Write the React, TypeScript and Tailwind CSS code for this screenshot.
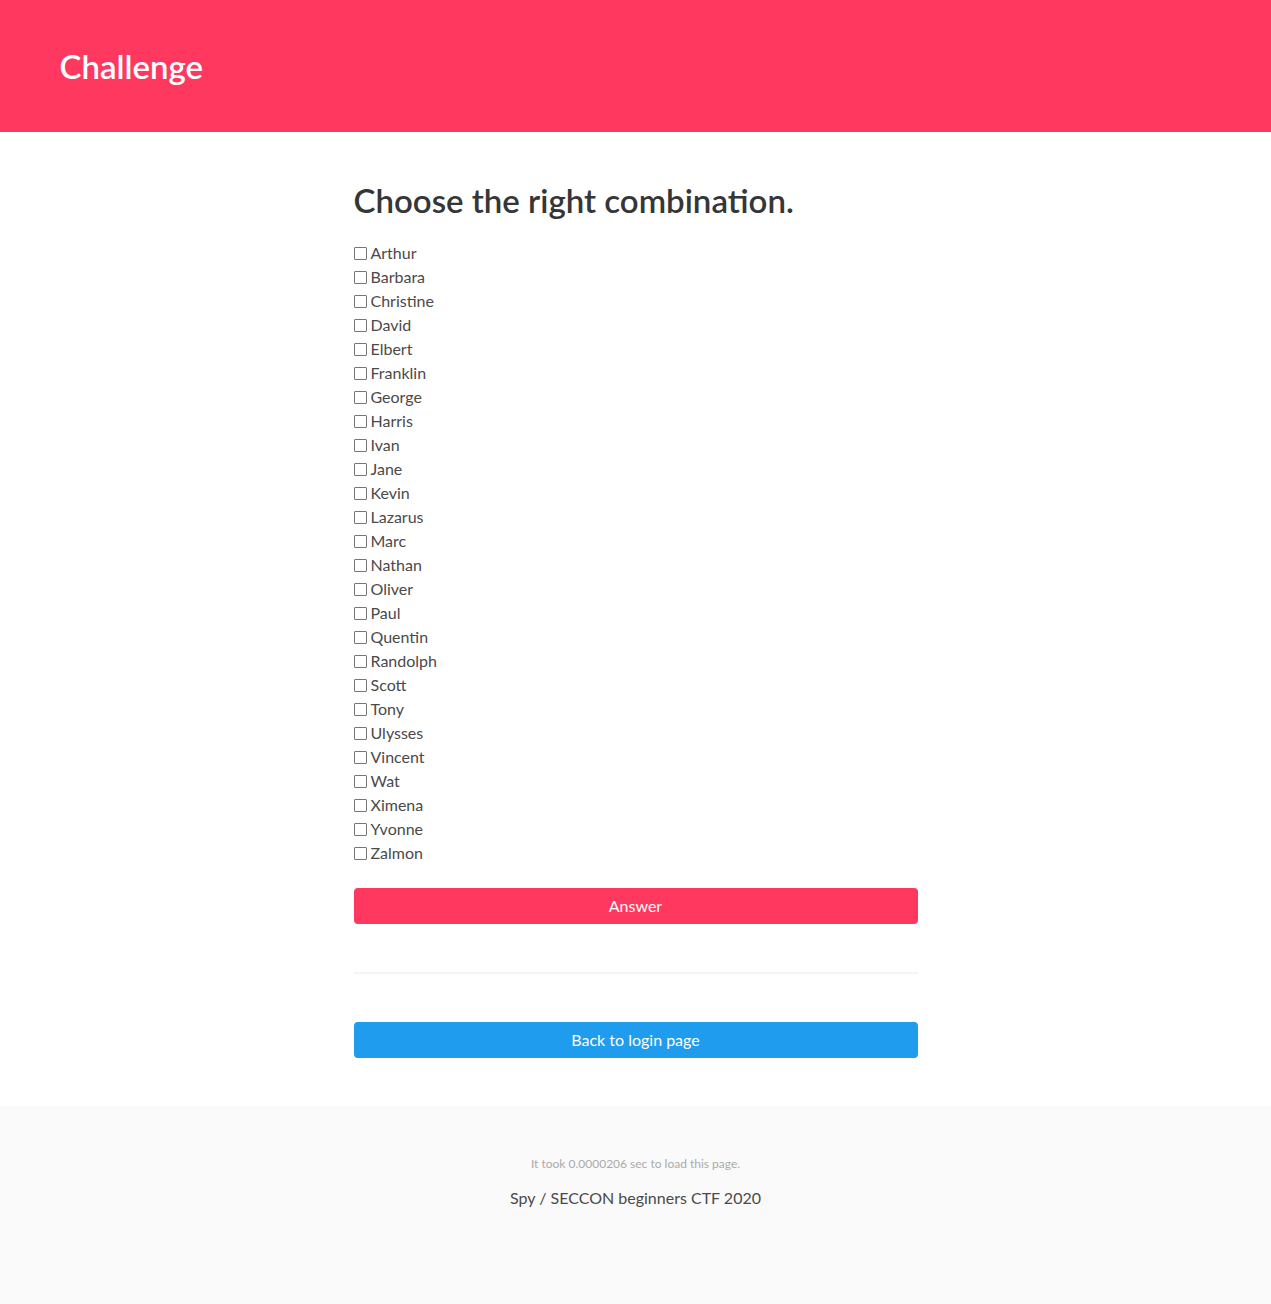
const NAMES = [
  "Arthur", "Barbara", "Christine", "David", "Elbert", "Franklin", "George", "Harris", "Ivan",
  "Jane", "Kevin", "Lazarus", "Marc", "Nathan", "Oliver", "Paul", "Quentin", "Randolph",
  "Scott", "Tony", "Ulysses", "Vincent", "Wat", "Ximena", "Yvonne", "Zalmon",
];

const font = "font-['Lato','Noto_Sans',sans-serif]";

export default function App() {
  return (
    <div className={`${font} bg-white text-[16px] text-[#4a4a4a]`}>
      <header className="bg-[#ff3860] py-12 px-6">
        <div className="mx-auto w-[1152px] max-w-full">
          <h1 className="text-[33px] leading-[36px] font-semibold text-white">Challenge</h1>
        </div>
      </header>

      <main className="pt-[50px] pb-12 px-6">
        <div className="mx-auto w-[564px]">
          <h2 className="text-[33px] leading-[36px] font-semibold text-[#363636] mb-[23px]">
            Choose the right combination.
          </h2>
          <form>
            <ul>
              {NAMES.map((n) => (
                <li key={n} className="h-6 flex items-center">
                  <label className="flex items-center">
                    <span className="w-[13px] h-[13px] border border-[#767676] bg-white mr-[4px] rounded-[1px]" />
                    <span className="leading-6">{n}</span>
                  </label>
                </li>
              ))}
            </ul>
            <button
              type="button"
              className="mt-[23px] w-full h-9 rounded bg-[#ff3860] text-white text-[16px]"
            >
              Answer
            </button>
          </form>
          <hr className="my-12 h-[2px] border-0 bg-[#f5f5f5]" />
          <button type="button" className="w-full h-9 rounded bg-[#209cee] text-white text-[16px]">
            Back to login page
          </button>
        </div>
      </main>

      <footer className="bg-[#fafafa] pt-12 pb-24 px-6 text-center">
        <p className="text-[12px] leading-5 text-[#aaa] mb-[12px]">It took 0.0000206 sec to load this page.</p>
        <p className="text-[16px] leading-6 text-[#4a4a4a]">Spy / SECCON beginners CTF 2020</p>
      </footer>
    </div>
  );
}
